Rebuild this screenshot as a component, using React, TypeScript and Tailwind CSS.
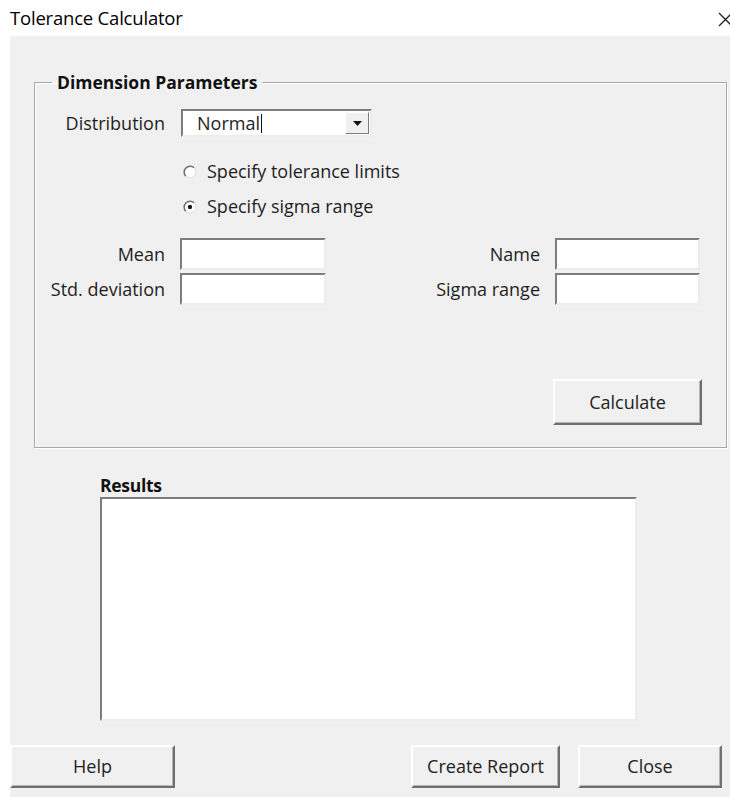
import React from "react";

const font = { fontFamily: '"Open Sans", "Noto Sans", sans-serif' };

function Radio({ checked }: { checked?: boolean }) {
  return (
    <svg width="14" height="14" viewBox="0 0 14 14" className="shrink-0">
      <circle cx="7" cy="7" r="6" fill="#ffffff" />
      <path d="M2.76 11.24 A6 6 0 0 1 11.24 2.76" stroke="#6f6f6f" strokeWidth="1.5" fill="none" />
      <path d="M11.24 2.76 A6 6 0 0 1 2.76 11.24" stroke="#e2e2e2" strokeWidth="1.2" fill="none" />
      {checked && <circle cx="7" cy="7" r="2.2" fill="#1a1a1a" />}
    </svg>
  );
}

function Field() {
  return (
    <div className="h-[32px] bg-white border-2 border-t-[#7d7d7d] border-l-[#7d7d7d] border-r-[#ececec] border-b-[#ececec]" />
  );
}

function Button({ label }: { label: string }) {
  return (
    <button className="w-full h-full flex items-center justify-center bg-[#f0f0f0] border-2 border-t-[#ffffff] border-l-[#ffffff] border-r-[#6f6f6f] border-b-[#6f6f6f] shadow-[inset_-1px_-1px_0_#b4b4b4] text-[18px] text-[#222]">
      {label}
    </button>
  );
}

export default function App() {
  return (
    <div className="w-[730px] h-[797px] overflow-hidden bg-white flex flex-col text-[#1e1e1e]" style={font}>
      {/* title bar */}
      <div className="h-[36px] shrink-0 flex items-center justify-between pl-[10px]">
        <span className="text-[18.5px] text-black tracking-[-0.2px]">Tolerance Calculator</span>
        <svg width="15" height="15" viewBox="0 0 15 15" className="mr-[-3px] mt-[2px]">
          <path d="M1 1 L14 14 M14 1 L1 14" stroke="#222" strokeWidth="1.3" />
        </svg>
      </div>

      {/* dialog body */}
      <div className="flex-1 ml-[10px] bg-[#f0f0f0] flex flex-col">
        <fieldset className="ml-[24px] mt-[34px] w-[693px] h-[378px] border border-[#a8a8a8] shadow-[inset_1px_1px_0_#ffffff,1px_1px_0_#ffffff] flex flex-col">
          <legend className="ml-[17px] px-[5px] text-[17.5px] font-bold leading-[24px] text-[#111]">
            Dimension Parameters
          </legend>

          {/* distribution */}
          <div className="mt-[15px] flex items-center">
            <span className="w-[130px] text-right text-[18px]">Distribution</span>
            <div className="ml-[16px] w-[191px] h-[28px] bg-white border-2 border-t-[#7d7d7d] border-l-[#7d7d7d] border-r-[#ececec] border-b-[#ececec] flex items-center">
              <span className="ml-[14px] text-[18px] leading-none">Normal</span>
              <span className="w-px h-[19px] bg-[#111] ml-[1px]" />
              <div className="ml-auto mr-[1px] w-[24px] h-[22px] bg-[#f0f0f0] border border-t-white border-l-white border-r-[#7a7a7a] border-b-[#7a7a7a] flex items-center justify-center">
                <svg width="9" height="5" viewBox="0 0 9 5">
                  <path d="M0 0 H9 L4.5 5 Z" fill="#111" />
                </svg>
              </div>
            </div>
          </div>

          {/* radio options */}
          <div className="mt-[22px] ml-[148px] flex flex-col gap-[10px] text-[18px]">
            <label className="flex items-center gap-[10px] leading-[25px]">
              <Radio />
              <span>Specify tolerance limits</span>
            </label>
            <label className="flex items-center gap-[10px] leading-[25px]">
              <Radio checked />
              <span>Specify sigma range</span>
            </label>
          </div>

          {/* numeric inputs */}
          <div className="mt-[19px] flex justify-between pr-[26px] text-[18px]">
            <div className="grid grid-cols-[130px_146px] gap-x-[15px] gap-y-[3px] items-center">
              <span className="text-right">Mean</span>
              <Field />
              <span className="text-right">Std. deviation</span>
              <Field />
            </div>
            <div className="grid grid-cols-[auto_145px] gap-x-[15px] gap-y-[3px] items-center">
              <span className="text-right">Name</span>
              <Field />
              <span className="text-right">Sigma range</span>
              <Field />
            </div>
          </div>

          <div className="mt-[74px] flex justify-end pr-[24px]">
            <div className="w-[149px] h-[46px] flex">
              <Button label="Calculate" />
            </div>
          </div>
        </fieldset>

        {/* results */}
        <div className="ml-[90px] mt-[25px] flex flex-col">
          <span className="text-[17.5px] font-bold leading-[24px] text-[#111] tracking-[-0.3px]">Results</span>
          <div className="w-[537px] h-[224px] bg-white border-2 border-t-[#7d7d7d] border-l-[#7d7d7d] border-r-[#ececec] border-b-[#ececec]" />
        </div>

        {/* footer buttons */}
        <div className="mt-[24px] flex items-start pr-[8px]">
          <div className="w-[165px] h-[43px] flex"><Button label="Help" /></div>
          <div className="ml-auto w-[149px] h-[43px] flex"><Button label="Create Report" /></div>
          <div className="ml-[18px] w-[144px] h-[43px] flex"><Button label="Close" /></div>
        </div>
      </div>
    </div>
  );
}
